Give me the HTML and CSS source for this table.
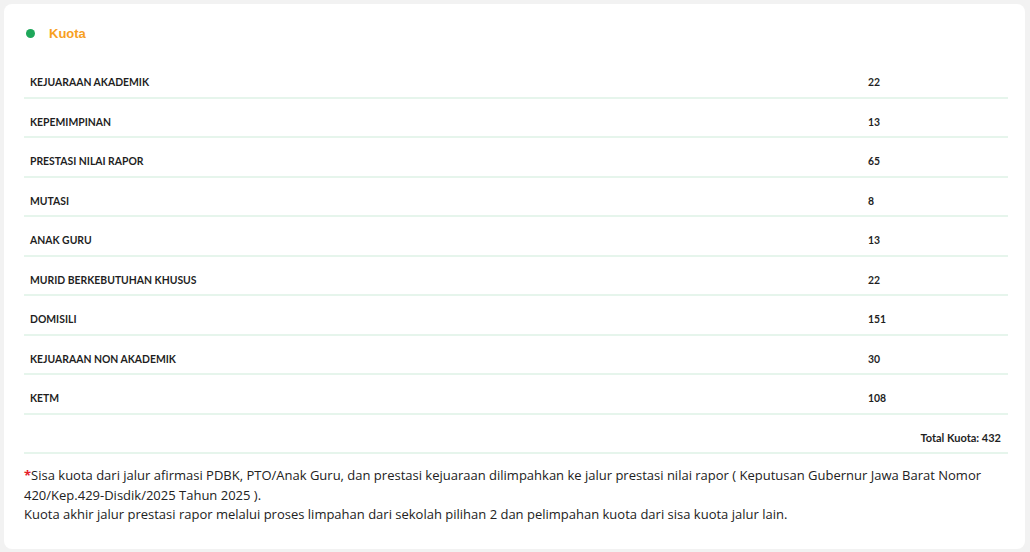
FILE: index.html
```html
<!DOCTYPE html>
<html lang="id">
<head>
<meta charset="utf-8">
<title>Kuota</title>
<link rel="stylesheet" href="styles.css">
</head>
<body>
<div class="card">
  <div class="title"><span class="dot"></span><span class="title-text">Kuota</span></div>
  <div class="table">
    <div class="row"><div class="name">KEJUARAAN AKADEMIK</div><div class="val">22</div></div>
    <div class="row"><div class="name">KEPEMIMPINAN</div><div class="val">13</div></div>
    <div class="row"><div class="name">PRESTASI NILAI RAPOR</div><div class="val">65</div></div>
    <div class="row"><div class="name">MUTASI</div><div class="val">8</div></div>
    <div class="row"><div class="name">ANAK GURU</div><div class="val">13</div></div>
    <div class="row"><div class="name">MURID BERKEBUTUHAN KHUSUS</div><div class="val">22</div></div>
    <div class="row"><div class="name">DOMISILI</div><div class="val">151</div></div>
    <div class="row"><div class="name">KEJUARAAN NON AKADEMIK</div><div class="val">30</div></div>
    <div class="row"><div class="name">KETM</div><div class="val">108</div></div>
    <div class="row total"><div class="total-text">Total Kuota: 432</div></div>
  </div>
  <p class="note"><span class="star">*</span>Sisa kuota dari jalur afirmasi PDBK, PTO/Anak Guru, dan prestasi kejuaraan dilimpahkan ke jalur prestasi nilai rapor ( Keputusan Gubernur Jawa Barat Nomor 420/Kep.429-Disdik/2025 Tahun 2025 ).<br>Kuota akhir jalur prestasi rapor melalui proses limpahan dari sekolah pilihan 2 dan pelimpahan kuota dari sisa kuota jalur lain.</p>
</div>
</body>
</html>
```
FILE: styles.css
```css
html, body {
  margin: 0;
  padding: 0;
}
body {
  background: #f2f2f2;
  padding: 4px 5px 3px 4px;
  font-family: Lato, "Liberation Sans", sans-serif;
  color: #1f1f1f;
}
.card {
  background: #fff;
  border-radius: 8px;
  height: 545px;
  box-sizing: border-box;
  padding: 20px 17px 0 20px;
}
.title {
  display: flex;
  align-items: center;
  height: 18px;
}
.dot {
  width: 9px;
  height: 9px;
  border-radius: 50%;
  background: #1ea75a;
  margin-left: 2px;
  margin-right: 14px;
}
.title-text {
  color: #f7a01f;
  font-family: "Liberation Sans", Arial, sans-serif;
  font-weight: bold;
  font-size: 13px;
}
.table {
  margin-top: 17px;
}
.row {
  display: flex;
  box-sizing: border-box;
  height: 39.5px;
  align-items: flex-end;
  padding-bottom: 8.5px;
  border-bottom: 2px solid #e6f5ec;
  font-size: 10.4px;
  font-weight: bold;
  line-height: 12px;
}
.name {
  width: 838px;
  padding-left: 6px;
}
.val {
  flex: 1;
}
.row.total {
  justify-content: flex-end;
  font-size: 11px;
}
.total-text {
  padding-right: 7px;
}
.note {
  margin: 12px 0 0;
  font-family: "Open Sans", sans-serif;
  font-size: 13px;
  line-height: 19.5px;
  color: #222;
}
.star {
  color: #e5202a;
  font-weight: bold;
}
```
